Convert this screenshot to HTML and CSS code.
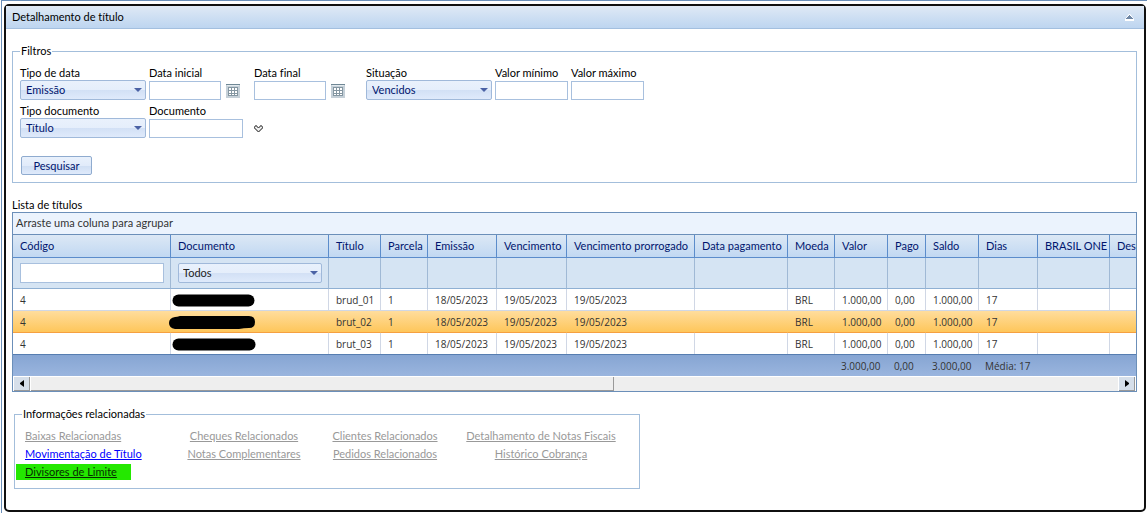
FILE: index.html
```
<!DOCTYPE html>
<html lang="pt-BR">
<head>
<meta charset="utf-8">
<title>Detalhamento de título</title>
<link rel="stylesheet" href="styles.css">
</head>
<body>
<svg class="defs" aria-hidden="true">
  <symbol id="calendar" viewBox="0 0 14 14">
    <path fill="#c5d0d8" d="M0 0h14v14H0z"/>
    <path fill="#6f8795" d="M0 0h14v1H0z"/>
    <path fill="#e3eaee" d="M1 1h12v1H1z"/>
    <path fill="#8496a1" d="M2 3h10v9H2z"/>
    <path fill="#fff" d="M3 4h2v2H3zM6 4h2v2H6zM9 4h2v2H9zM3 7h2v2H3zM6 7h2v2H6zM9 7h2v2H9zM3 10h2v1H3zM6 10h2v1H6zM9 10h2v1H9z"/>
  </symbol>
</svg>
<div class="page">
<main class="panel">
  <header class="panel-head">
    <h1>Detalhamento de título</h1>
    <button class="collapse" type="button" aria-label="Recolher">
      <svg width="9" height="7" viewBox="0 0 9 7"><path fill="#fff" d="M4 0h1l4 5v2H0V5z"/><path fill="#6f87a5" d="M4 1h1v1h1v1h1v1h1v1H1V4h1V3h1V2h1z"/></svg>
    </button>
  </header>
  <div class="content">
    <fieldset class="box filters">
      <legend>Filtros</legend>
      <div class="fields">
        <div class="field wide"><label for="tipo-data">Tipo de data</label><span class="select"><select id="tipo-data"><option>Emissão</option></select></span></div>
        <div class="field date"><label for="data-ini">Data inicial</label><span class="entry"><input id="data-ini" type="text"><button class="cal" type="button" aria-label="Abrir calendário"><svg width="14" height="14"><use href="#calendar"/></svg></button></span></div>
        <div class="field date last"><label for="data-fim">Data final</label><span class="entry"><input id="data-fim" type="text"><button class="cal" type="button" aria-label="Abrir calendário"><svg width="14" height="14"><use href="#calendar"/></svg></button></span></div>
        <div class="field wide"><label for="situacao">Situação</label><span class="select"><select id="situacao"><option>Vencidos</option></select></span></div>
        <div class="field value"><label for="vmin">Valor mínimo</label><span class="entry"><input id="vmin" type="text"></span></div>
        <div class="field value"><label for="vmax">Valor máximo</label><span class="entry"><input id="vmax" type="text"></span></div>
      </div>
      <div class="fields">
        <div class="field wide"><label for="tipo-doc">Tipo documento</label><span class="select"><select id="tipo-doc"><option>Título</option></select></span></div>
        <div class="field doc"><label for="doc">Documento</label><span class="entry"><input id="doc" type="text"><button class="more" type="button" aria-label="Mais opções"><svg width="9" height="8" viewBox="0 0 9 8"><path fill="#eee" stroke="#585858" d="M1.500.5h1v1h1v1h2v-1h1v-1h1v1h1v2h-1v1h-1v1h-1v1h-2v-1h-1v-1h-1v-1h-1v-2h1z"/></svg></button></span></div>
      </div>
      <button class="search" type="button">Pesquisar</button>
    </fieldset>

    <h2>Lista de títulos</h2>
    <section class="grid">
      <div class="group">Arraste uma coluna para agrupar</div>
      <div class="viewport">
        <table>
          <colgroup><col class="c158"><col class="c158"><col class="c52"><col class="c47"><col class="c69"><col class="c70"><col class="c128"><col class="c93"><col class="c47"><col class="c53"><col class="c38"><col class="c53"><col class="c59"><col class="c72"><col class="c158"></colgroup>
          <thead>
            <tr><th>Código</th><th>Documento</th><th>Título</th><th>Parcela</th><th>Emissão</th><th>Vencimento</th><th>Vencimento prorrogado</th><th>Data pagamento</th><th>Moeda</th><th>Valor</th><th>Pago</th><th>Saldo</th><th>Dias</th><th>BRASIL ONE</th><th>Desc</th></tr>
            <tr class="filter-row"><td><input type="text" aria-label="Filtrar código"></td><td><span class="select"><select aria-label="Filtrar documento"><option>Todos</option></select></span></td><td></td><td></td><td></td><td></td><td></td><td></td><td></td><td></td><td></td><td></td><td></td><td></td><td></td></tr>
          </thead>
          <tbody>
            <tr><td>4</td><td class="masked"><svg width="90" height="15" viewBox="0 0 90 15"><path d="M9.500 7.500H79.500" stroke="#000" stroke-width="12" stroke-linecap="round"/></svg></td><td>brud_01</td><td>1</td><td>18/05/2023</td><td>19/05/2023</td><td>19/05/2023</td><td></td><td>BRL</td><td>1.000,00</td><td>0,00</td><td>1.000,00</td><td>17</td><td></td><td></td></tr>
            <tr class="selected"><td>4</td><td class="masked"><svg width="90" height="15" viewBox="0 0 90 15"><path d="M6 2Q8 2 11 1H80Q86 1 86 7Q86 13 80 13Q75 13 70 14H6Q0 13 0 8Q0 3 6 2Z"/></svg></td><td>brut_02</td><td>1</td><td>18/05/2023</td><td>19/05/2023</td><td>19/05/2023</td><td></td><td>BRL</td><td>1.000,00</td><td>0,00</td><td>1.000,00</td><td>17</td><td></td><td></td></tr>
            <tr><td>4</td><td class="masked"><svg width="90" height="15" viewBox="0 0 90 15"><path d="M9.500 7.500H80.500" stroke="#000" stroke-width="12" stroke-linecap="round"/></svg></td><td>brut_03</td><td>1</td><td>18/05/2023</td><td>19/05/2023</td><td>19/05/2023</td><td></td><td>BRL</td><td>1.000,00</td><td>0,00</td><td>1.000,00</td><td>17</td><td></td><td></td></tr>
          </tbody>
          <tfoot>
            <tr><td colspan="9"></td><td>3.000,00</td><td>0,00</td><td>3.000,00</td><td>Média: 17</td><td></td><td></td></tr>
          </tfoot>
        </table>
      </div>
      <div class="scroll">
        <button type="button" aria-label="Rolar para a esquerda"><svg width="4" height="7" viewBox="0 0 4 7"><path d="M4 0v7L0 4V3z"/></svg></button>
        <div class="track"><div class="thumb"></div></div>
        <button type="button" aria-label="Rolar para a direita"><svg width="4" height="7" viewBox="0 0 4 7"><path d="M0 0v7l4-3V3z"/></svg></button>
      </div>
    </section>

    <fieldset class="box related">
      <legend>Informações relacionadas</legend>
      <nav class="links">
        <a href="#">Baixas Relacionadas</a><a href="#">Cheques Relacionados</a><a href="#">Clientes Relacionados</a><a href="#">Detalhamento de Notas Fiscais</a>
        <a href="#" class="active">Movimentação de Título</a><a href="#">Notas Complementares</a><a href="#">Pedidos Relacionados</a><a href="#">Histórico Cobrança</a>
        <a href="#" class="marked">Divisores de Limite</a>
      </nav>
    </fieldset>
  </div>
</main>
</div>
</body>
</html>
```
FILE: styles.css
```
* { box-sizing: border-box; }
body, input, select, button {
  font-family: Lato, "Open Sans", sans-serif;
  font-size: 11px;
  line-height: 16px;
  font-variant-ligatures: none;
}
body { margin: 0; color: #000; background: #fff; }
h1, h2 { margin: 0; font-size: 11px; font-weight: 400; }
button { padding: 0; border: 0; background: none; }
svg { display: block; }
.defs { width: 0; height: 0; position: absolute; }

.page {
  min-height: 100vh;
  margin-left: 1px;
  padding: 3px 1px 1px 2px;
  border-top: 1px solid #6b8fb9;
  border-left: 1px solid #6b8fb9;
}
.panel {
  min-height: calc(100vh - 5px);
  border: 2px solid #101010;
  border-radius: 5px;
}
.panel-head {
  display: flex;
  justify-content: space-between;
  align-items: center;
  height: 23px;
  padding: 0 10px 0 6px;
  border-bottom: 1px solid #a3bfdf;
  background: linear-gradient(#dfe9f5, #bdd5f0);
}
.collapse { height: 9px; }
.content { padding: 14px 7px 0 6px; }

.box { min-width: 0; margin: 0; border: 1px solid #a3bedb; }
.box legend { padding: 0 1px; margin-left: 0; }
.filters { padding: 6px 7px 7px; }
.fields { display: flex; align-items: flex-start; gap: 3px; }
.field { display: flex; flex-direction: column; height: 38px; }
.field label { height: 15px; white-space: nowrap; }
.wide { width: 126px; }
.date { width: 102px; }
.last { width: 109px; }
.value { width: 73px; }
.doc { width: 120px; }
.entry { display: flex; align-items: center; padding-top: 1px; }
input {
  flex: 1;
  width: 100%;
  min-width: 0;
  height: 19px;
  padding: 0 4px;
  border: 1px solid #a8c0de;
  background: #fff;
}
.date input { flex: 0 0 72px; }
.date .cal { margin-left: 5px; }
.doc input { flex: 0 0 94px; }
.doc .more { margin-left: 11px; }

.select { position: relative; display: block; }
.select::after {
  content: "";
  position: absolute;
  top: 8px;
  right: 4px;
  border: 4px solid transparent;
  border-top-color: #4b62a5;
  border-bottom: 0;
  pointer-events: none;
}
select {
  appearance: none;
  display: block;
  width: 100%;
  height: 20px;
  padding: 0 18px 0 5px;
  border: 1px solid #a0b9da;
  border-radius: 2px;
  color: #00156e;
  background: linear-gradient(#e9f1fc 0, #e5eefb 50%, #d2e0f5 50%, #dfeafb 100%);
}
.search {
  width: 71px;
  height: 19px;
  margin: 15px 0 0 1px;
  border: 1px solid #8fabcf;
  border-radius: 2px;
  color: #00156e;
  background: linear-gradient(#e9f1fc 0, #e1ebfa 50%, #cfdef3 50%, #dfeafb 100%);
  line-height: 17px;
}

h2 { margin-top: 14px; line-height: 15px; }
.grid { border: 1px solid #6b8fb9; color: #333; }
.group { height: 22px; padding: 2px 3px; border-bottom: 1px solid #6b8fb9; background: #ebf3fd; }
.viewport { overflow: hidden; }
table { width: 1255px; table-layout: fixed; border-spacing: 0; }
.c158 { width: 158px; } .c128 { width: 128px; } .c93 { width: 93px; }
.c72 { width: 72px; } .c70 { width: 70px; } .c69 { width: 69px; }
.c59 { width: 59px; } .c53 { width: 53px; } .c52 { width: 52px; }
.c47 { width: 47px; } .c38 { width: 38px; }
th, td { padding: 0 0 0 7px; text-align: left; white-space: nowrap; font-weight: 400; }
th {
  height: 23px;
  border-right: 1px solid #5b8ccb;
  border-bottom: 1px solid #5b8ccb;
  color: #00156e;
  background: linear-gradient(#dce8f5, #c1d8f2);
}
.filter-row td {
  height: 31px;
  padding: 0 6px 0 7px;
  border-right: 1px solid #a0b9d5;
  border-bottom: 1px solid #8fb0d3;
  background: #d5e4f3;
}
.filter-row input { display: block; height: 20px; }
.filter-row select { padding-left: 4px; color: #222; }
tbody, tfoot { font-family: "Open Sans", "Noto Sans", sans-serif; font-size: 10px; }
tbody td { height: 22px; border-right: 1px solid #d0d7e5; border-bottom: 1px solid #d0d7e5; }
tbody tr:last-child td { height: 21px; border-bottom: 0; }
tbody td.masked { position: relative; }
.masked svg { position: absolute; top: 4px; left: -2px; }
.selected { background: linear-gradient(#ffdd9d, #fec557); }
.selected td { border-right-color: transparent; border-bottom-color: #f6a040; }
tfoot td {
  height: 22px;
  padding-left: 6px;
  border-top: 1px solid #567db0;
  background: linear-gradient(#86a5d3, #9ab5de);
}
.scroll { display: flex; height: 15px; padding: 1px 1px 0; background: #fff; }
.scroll button {
  display: grid;
  place-items: center;
  width: 16px;
  background: #d6dfea;
  border-right: 1px solid #999;
  border-bottom: 1px solid #999;
}
.track { flex: 1; margin: 0 1px; background: #eee; }
.thumb { width: 53.6%; height: 100%; background: #eee; border-right: 1px solid #999; border-bottom: 1px solid #999; }

.related { max-width: 626px; margin: 14px 0 0 2px; padding: 5px 10px 7px; }
.related legend { margin-left: -3px; }
.links { display: grid; grid-template-columns: 148px 142px 140px 172px; grid-auto-rows: 18px; justify-items: center; align-items: center; }
.links a { color: #999; white-space: nowrap; }
.links a:nth-child(4n + 1) { justify-self: start; }
.links .active { color: #00f; }
.links .marked { margin-left: -9px; padding: 0 14px 0 9px; color: #062e00; background: #24e800; }
```
